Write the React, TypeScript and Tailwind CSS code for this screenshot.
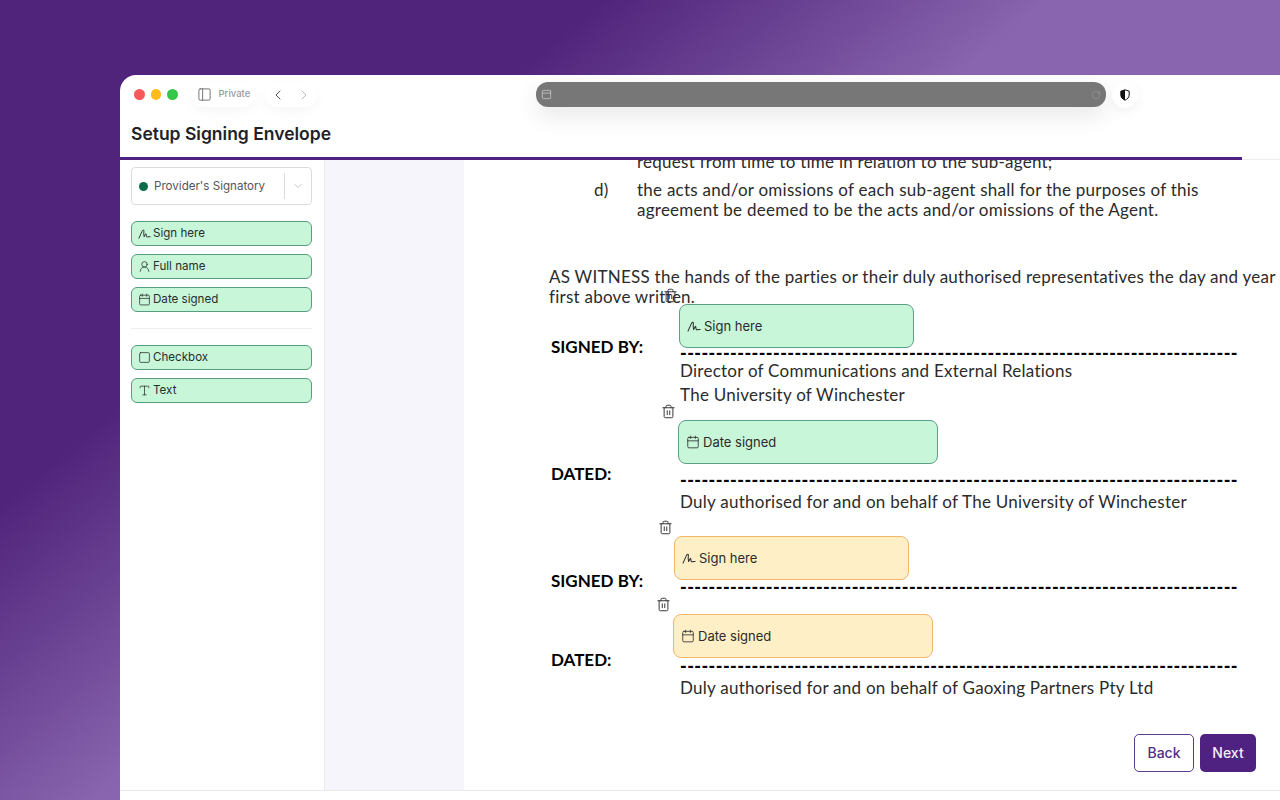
import { Calendar, ChevronDown, ChevronLeft, ChevronRight, PanelLeft, RotateCw, Square, Trash2, Type, UserRound, type LucideIcon } from "lucide-react";

function SignIcon({ className }: { className?: string; strokeWidth?: number }) {
  return (
    <svg viewBox="0 0 16 16" fill="none" stroke="currentColor" strokeWidth={1.2} strokeLinecap="round" strokeLinejoin="round" className={className}>
      <path d="M1.2 13.8 C3 10 4.6 5.5 5.8 4 C6.8 3 7.5 4 7.2 6 C7 8 7 10.5 7.6 12 C8.3 10.5 9.2 8.2 9.8 8.2 C10.4 8.4 9.8 11.5 10.8 12.2 C11.8 12.6 12.4 11.6 15 12" />
    </svg>
  );
}

function PaletteItem({ icon: Icon, label }: { icon: LucideIcon | typeof SignIcon; label: string }) {
  return (
    <div className="flex h-[25px] items-center gap-[2px] rounded-[6px] border border-[#5a9c80] bg-[#c8f6d8] px-[6px] text-[11.6px] text-[#27302c]">
      <Icon className="size-[13px] shrink-0" strokeWidth={1.4} />
      <span>{label}</span>
    </div>
  );
}

function Dropped({ tone, icon: Icon, label, trash, className }: { tone: "green" | "amber"; icon: LucideIcon | typeof SignIcon; label: string; trash: string; className: string }) {
  const toneClass = tone === "green" ? "border-[#5d9f84] bg-[#c8f6d8]" : "border-[#f3b765] bg-[#feefc6]";
  return (
    <>
      <Trash2 className={`absolute size-[15px] text-[#3a3a3a] ${trash}`} strokeWidth={1.6} />
      <div className={`absolute flex h-[44px] items-center gap-[3px] rounded-[8px] border px-[7px] text-[13px] text-[#2b2b2b] ${toneClass} ${className}`}>
        <Icon className="size-[14px] shrink-0" strokeWidth={1.4} />
        <span>{label}</span>
      </div>
    </>
  );
}

const DASHES = "-".repeat(78);

function SigRow({ label, className }: { label: string; className: string }) {
  return (
    <div className={`flex h-[16px] items-center ${className}`}>
      <div className="w-[131px] shrink-0 -translate-y-[6px] pl-[2px] font-bold tracking-normal text-black">{label}</div>
      <div className="w-[557px] whitespace-nowrap text-[18px] font-black leading-[16px] tracking-[0.43px] text-black">{DASHES}</div>
    </div>
  );
}

export default function App() {
  return (
    <div className="relative h-[800px] w-[1280px] overflow-hidden bg-[linear-gradient(140deg,#50247b_0%,#50247b_27%,#8865ae_47%,#8865ae_100%)] font-['Inter',sans-serif]">
      <div className="absolute left-[120px] top-[75px] flex h-[725px] w-[1160px] flex-col overflow-hidden rounded-tl-[16px] bg-white">
        <header className="h-[82px] shrink-0">
          <div className="flex h-[39px] items-center pl-[14px]">
            <div className="flex items-center gap-[6px]">
              <span className="size-[10.5px] rounded-full bg-[#f9595a]" />
              <span className="size-[10.5px] rounded-full bg-[#fdbc1b]" />
              <span className="size-[10.5px] rounded-full bg-[#34c648]" />
            </div>
            <div className="ml-[14px] flex h-[24px] items-center gap-[7px] rounded-full bg-white px-[5px] shadow-[0_4px_12px_rgba(0,0,0,0.04)]">
              <PanelLeft className="size-[15px] text-[#5a5a5a]" strokeWidth={1.3} />
              <span className="text-[9.5px] font-medium text-[#9a9a9a]">Private</span>
            </div>
            <div className="ml-[10px] flex h-[24px] items-center gap-[10px] rounded-full bg-white px-[5px] shadow-[0_4px_12px_rgba(0,0,0,0.04)]">
              <ChevronLeft className="size-[16px] text-[#555]" strokeWidth={1.5} />
              <ChevronRight className="size-[16px] text-[#bbb]" strokeWidth={1.5} />
            </div>
            <div className="ml-[219px] flex h-[25px] w-[570px] items-center justify-between rounded-[12px] bg-[#777777] px-[5px] shadow-[0_8px_24px_rgba(0,0,0,0.1)]">
              <PanelLeft className="size-[11px] rotate-90 text-[#d4d4d4]" strokeWidth={1.5} />
              <RotateCw className="size-[10px] text-[#9a9a9a]" strokeWidth={1.5} />
            </div>
            <div className="ml-[6px] flex size-[26px] items-center justify-center rounded-full bg-white shadow-[0_4px_12px_rgba(0,0,0,0.05)]">
              <svg viewBox="0 0 12 14" className="h-[12px] w-[10px]">
                <path d="M6 .8 11 2.4V7c0 3-2.2 5-5 6.2C3.2 12 1 10 1 7V2.4Z" fill="#fff" stroke="#111" strokeWidth="1.2" />
                <path d="M6 .8V13.2C3.2 12 1 10 1 7V2.4Z" fill="#111" />
              </svg>
            </div>
          </div>
          <h1 className="mt-[6px] pl-[11px] text-[17.5px] font-semibold leading-[28px] text-[#222226]">Setup Signing Envelope</h1>
        </header>

        <div className="relative h-[3px] shrink-0">
          <div className="absolute bottom-0 left-0 right-0 h-px bg-[#ececec]" />
          <div className="absolute inset-y-0 left-0 w-[1122px] bg-[#4f2180]" />
        </div>

        <main className="flex min-h-0 flex-1">
          <aside className="flex w-[205px] shrink-0 flex-col border-r border-[#e9e9ee] pl-[11px] pr-[12px] pt-[7px]">
            <div className="flex h-[38px] items-center rounded-[4px] border border-[#dcdcdc] pl-[7px] text-[11.6px] text-[#555]">
              <span className="size-[9px] rounded-full bg-[#0f6b4e]" />
              <span className="ml-[6px] flex-1 translate-y-px">Provider's Signatory</span>
              <span className="h-[26px] w-px bg-[#dcdcdc]" />
              <ChevronDown className="mx-[7px] size-[12px] text-[#c4c4c4]" />
            </div>
            <div className="mt-[16px] flex flex-col gap-[8px]">
              <PaletteItem icon={SignIcon} label="Sign here" />
              <PaletteItem icon={UserRound} label="Full name" />
              <PaletteItem icon={Calendar} label="Date signed" />
            </div>
            <div className="my-[16px] h-px bg-[#eeeeee]" />
            <div className="flex flex-col gap-[8px]">
              <PaletteItem icon={Square} label="Checkbox" />
              <PaletteItem icon={Type} label="Text" />
            </div>
          </aside>
          <div className="w-[139px] shrink-0 bg-[#f5f5fb]" />
          <section className="relative min-w-0 flex-1 overflow-hidden font-['Lato',sans-serif] text-[17px] leading-[20px] tracking-[0.25px] text-[#2b2b2b]">
            <div className="w-[816px] pl-[85px]">
              <p className="-mt-[8px] ml-[88px] whitespace-nowrap">request from time to time in relation to the sub-agent;</p>
              <div className="mt-[8px] flex">
                <span className="w-[88px] pl-[45px]">d)</span>
                <p className="w-[620px]">the acts and/or omissions of each sub-agent shall for the purposes of this agreement be deemed to be the acts and/or omissions of the Agent.</p>
              </div>
              <p className="mt-[47px] w-[730px]">AS WITNESS the hands of the parties or their duly authorised representatives the day and year first above written.</p>
              <SigRow label="SIGNED BY:" className="mt-[38px]" />
              <p className="ml-[131px]">Director of Communications and External Relations</p>
              <p className="ml-[131px] mt-[4px]">The University of Winchester</p>
              <SigRow label="DATED:" className="mt-[67px]" />
              <p className="ml-[131px] mt-[4px]">Duly authorised for and on behalf of The University of Winchester</p>
              <SigRow label="SIGNED BY:" className="mt-[67px]" />
              <SigRow label="DATED:" className="mt-[63px]" />
              <p className="ml-[131px] mt-[4px]">Duly authorised for and on behalf of Gaoxing Partners Pty Ltd</p>
            </div>
            <div className="font-['Inter',sans-serif] tracking-normal">
              <Dropped tone="green" icon={SignIcon} label="Sign here" trash="left-[199px] top-[128px]" className="left-[215px] top-[144px] w-[235px]" />
              <Dropped tone="green" icon={Calendar} label="Date signed" trash="left-[197px] top-[244px]" className="left-[214px] top-[260px] w-[260px]" />
              <Dropped tone="amber" icon={SignIcon} label="Sign here" trash="left-[194px] top-[360px]" className="left-[210px] top-[376px] w-[235px]" />
              <Dropped tone="amber" icon={Calendar} label="Date signed" trash="left-[192px] top-[437px]" className="left-[209px] top-[454px] w-[260px]" />
            </div>
            <div className="absolute bottom-[18px] right-[24px] flex gap-[6px] font-['Inter',sans-serif] text-[14px] font-medium tracking-normal">
              <button className="h-[38px] w-[60px] rounded-[5px] border border-[#5b3a8c] bg-white text-[#53307f]">Back</button>
              <button className="h-[38px] w-[56px] rounded-[5px] bg-[#4f2180] text-[#f3eef8]">Next</button>
            </div>
          </section>
        </main>
        <div className="h-[10px] shrink-0 border-t border-[#e9e9e9]" />
      </div>
    </div>
  );
}
